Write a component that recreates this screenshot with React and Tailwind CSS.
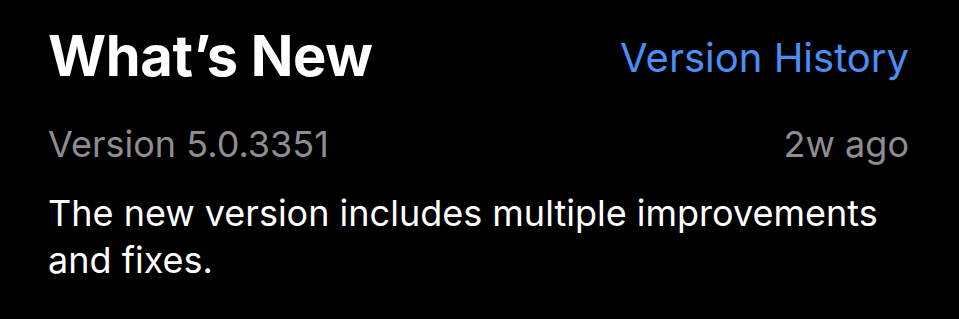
export default function App() {
  return (
    <div className="w-[959px] h-[319px] bg-black pl-[48px] pr-[50px] pt-[24px]" style={{ fontFamily: "Inter, 'Noto Sans', sans-serif" }}>
      <div className="flex items-start justify-between">
        <h1 className="text-[56px] font-bold text-white leading-[64px] tracking-[-0.3px]">What’s New</h1>
        <span className="mt-[2px] text-[40px] text-[#4a8ff5] leading-[64px]">Version History</span>
      </div>
      <div className="flex items-baseline justify-between mt-[32px]">
        <span className="text-[36px] text-[#8d8d92] leading-[44px]">Version 5.0.3351</span>
        <span className="text-[36px] text-[#8d8d92] leading-[44px]">2w ago</span>
      </div>
      <p className="mt-[24px] text-[36px] text-white leading-[47px]">
        The new version includes multiple improvements and fixes.
      </p>
    </div>
  );
}
